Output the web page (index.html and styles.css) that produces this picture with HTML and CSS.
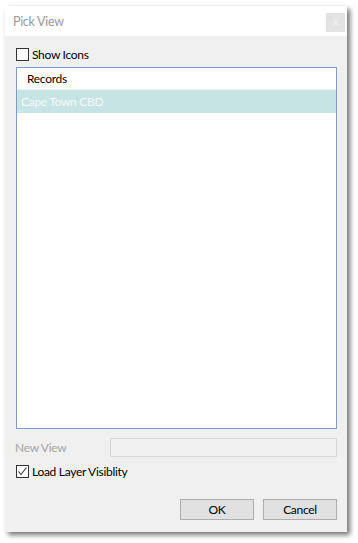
FILE: index.html
```html
<!DOCTYPE html>
<html lang="en">
<head>
    <meta charset="UTF-8">
    <meta name="viewport" content="width=device-width, initial-scale=1.0">
    <title>Pick View</title>
    <link rel="stylesheet" href="styles.css">
</head>
<body>
    <div class="page">
        <div class="window">
            <div class="titlebar">
                <span class="title">Pick View</span>
                <span class="close">&#215;</span>
            </div>
            <div class="content">
                <label class="check">
                    <span class="box"></span>
                    <span>Show Icons</span>
                </label>
                <div class="list">
                    <div class="list-header">Records</div>
                    <div class="list-row selected">Cape Town CBD</div>
                </div>
                <div class="new-view">
                    <span class="label">New View</span>
                    <div class="input"></div>
                </div>
                <label class="check check-load">
                    <span class="box">
                        <svg width="11" height="11" viewBox="0 0 11 11"><path d="M1.5 5.5 L4 8.5 L9.5 1.5" fill="none" stroke="#333" stroke-width="1.1"/></svg>
                    </span>
                    <span>Load Layer Visiblity</span>
                </label>
                <div class="buttons">
                    <button>OK</button>
                    <button>Cancel</button>
                </div>
            </div>
        </div>
    </div>
</body>
</html>
```

FILE: styles.css
```css
body {
    margin: 0;
    padding: 0;
    background-color: #ffffff;
    font-family: Lato, "Noto Sans", sans-serif;
    font-size: 12px;
    letter-spacing: -0.3px;
    color: #000;
}
.page {
    padding: 6px 11px 11px 5px;
}
.window {
    width: 342px;
    height: 526px;
    background: #f0f0f0;
    box-shadow: 3px 3px 5px rgba(0, 0, 0, 0.55);
    display: flex;
    flex-direction: column;
}
.titlebar {
    height: 30px;
    background: #ffffff;
    display: flex;
    align-items: center;
    justify-content: space-between;
    padding: 0 2px 0 8px;
}
.title {
    color: #9a9a9a;
    font-size: 12.5px;
}
.close {
    width: 19px;
    height: 19px;
    background: #e3e3e3;
    color: #f4f4f4;
    font-size: 13px;
    line-height: 18px;
    text-align: center;
    margin-top: 3px;
}
.content {
    padding: 12px 10px 12px 11px;
    display: flex;
    flex-direction: column;
}
.check {
    display: flex;
    align-items: center;
    gap: 3px;
    height: 13px;
}
.box {
    width: 11px;
    height: 11px;
    border: 1px solid #333;
    background: #fff;
    display: flex;
}
.list {
    margin-top: 6px;
    height: 360px;
    border: 1px solid #7f9dc4;
    background: #fff;
}
.list-header {
    height: 21px;
    line-height: 21px;
    padding-left: 10px;
    border-bottom: 1px solid #f0f0f0;
}
.list-row {
    height: 23px;
    line-height: 23px;
    padding-left: 4px;
}
.selected {
    background: #c6e4e4;
    color: #f6fafa;
}
.new-view {
    margin-top: 9px;
    display: flex;
    align-items: center;
    justify-content: space-between;
    height: 19px;
}
.label {
    color: #a3a3a3;
    margin-left: -1px;
}
.input {
    width: 225px;
    height: 17px;
    border: 1px solid #d6d6d6;
    background: #f0f0f0;
}
.check-load {
    margin-top: 8px;
}
.check-load .box {
    align-items: center;
    justify-content: center;
}
.buttons {
    margin-top: 21px;
    display: flex;
    justify-content: flex-end;
    gap: 9px;
}
button {
    width: 74px;
    height: 21px;
    background: #e1e1e1;
    border: 1px solid #adadad;
    font-family: Lato, "Noto Sans", sans-serif;
    font-size: 12px;
    letter-spacing: -0.3px;
    color: #000;
    padding: 0;
}
```
